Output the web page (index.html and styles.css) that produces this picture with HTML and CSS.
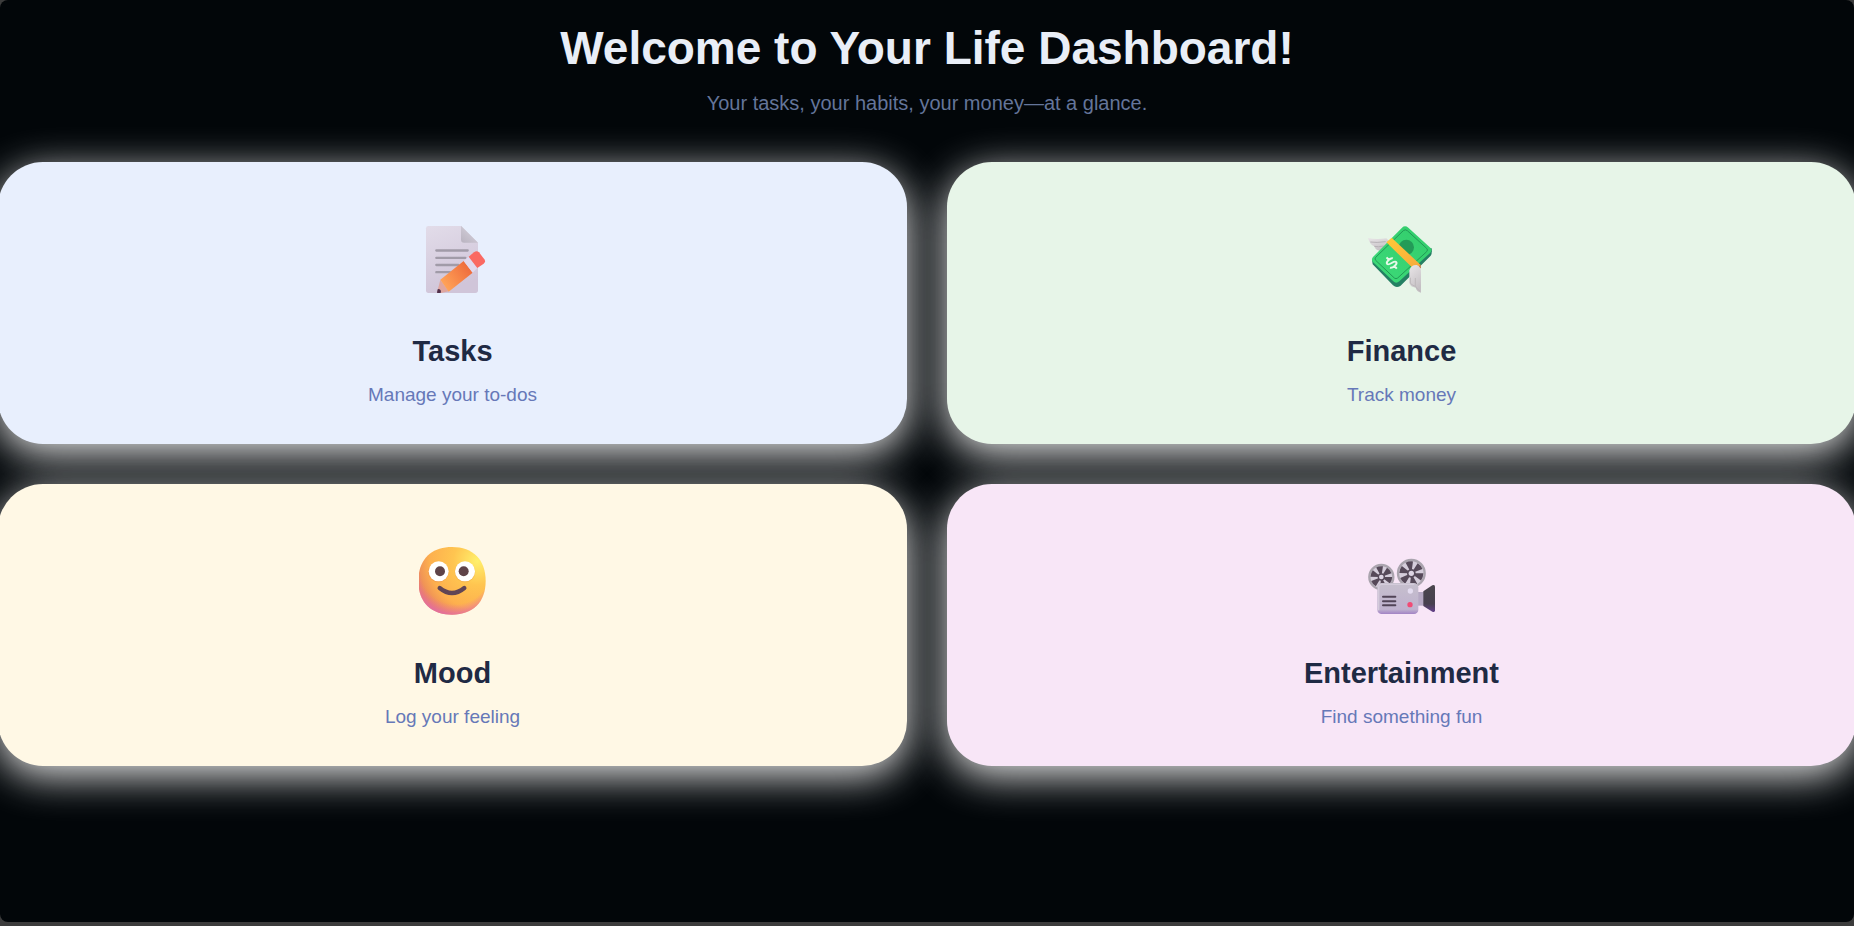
FILE: index.html
```html
<!DOCTYPE html>
<html lang="en">
<head>
<meta charset="utf-8">
<meta name="viewport" content="width=device-width, initial-scale=1">
<title>Life Dashboard</title>
<link rel="stylesheet" href="styles.css">
</head>
<body>
<main class="dashboard">
  <header class="intro">
    <h1 class="intro-title">Welcome to Your Life Dashboard!</h1>
    <p class="intro-text">Your tasks, your habits, your money—at a glance.</p>
  </header>
  <nav class="cards" aria-label="Sections">
    <a class="card card-tasks" href="#tasks">
      <svg class="card-icon" viewBox="57 45 204 204" aria-hidden="true">
        <defs>
          <linearGradient id="paper" x1="0" y1="0" x2="0.3" y2="1"><stop offset="0" stop-color="#e2dce9"/><stop offset="1" stop-color="#d0c5d9"/></linearGradient>
          <linearGradient id="fold" x1="0" y1="1" x2="0.6" y2="0.3"><stop offset="0" stop-color="#b9b3c0"/><stop offset="1" stop-color="#cfcad5"/></linearGradient>
          <linearGradient id="pencil" gradientUnits="userSpaceOnUse" x1="130" y1="220" x2="205" y2="165"><stop offset="0" stop-color="#ffa257"/><stop offset="1" stop-color="#ee6b3c"/></linearGradient>
        </defs>
        <path d="M85 48H183L234 98V241Q234 249 226 249H85Q78 249 78 241V55Q78 48 85 48Z" fill="url(#paper)"/>
        <path d="M183 47L234 98H192Q183 98 183 89Z" fill="url(#fold)"/>
        <path d="M109 121.500H203M109 143.500H196M109 165H175M109 186.500H150" stroke="#a19ba8" stroke-width="7" stroke-linecap="round"/>
        <path d="M111 248L121 209L146 244L124 249H113Z" fill="#dfa6a0"/>
        <path d="M111 248L113 238Q119 235 123 242L122 249H113Z" fill="#50304b"/>
        <path d="M121 209L191 153L218 188L146 245Z" fill="url(#pencil)"/>
        <path d="M191 153L206 140L232 174L218 188Z" fill="#e1d9ee"/>
        <path d="M206 140L222 127Q230 121 237 127L253 148Q258 155 251 161L232 174Z" fill="#fa6962"/>
      </svg>
      <h2 class="card-title">Tasks</h2>
      <p class="card-text">Manage your to-dos</p>
    </a>
    <a class="card card-finance" href="#finance">
      <svg class="card-icon" viewBox="57 45 204 204" aria-hidden="true">
        <defs>
          <linearGradient id="bill" x1="0" y1="1" x2="1" y2="0"><stop offset="0" stop-color="#3dda79"/><stop offset="1" stop-color="#32cc6b"/></linearGradient>
          <linearGradient id="band" x1="0" y1="0" x2="1" y2="1"><stop offset="0" stop-color="#ffca38"/><stop offset="1" stop-color="#f5a83b"/></linearGradient>
          <linearGradient id="wing" x1="0" y1="0" x2="0.4" y2="1"><stop offset="0" stop-color="#e9e6e8"/><stop offset="1" stop-color="#c5c0c4"/></linearGradient>
        </defs>
        <path d="M57 84Q80 89 112 85L123 96L97 123Q78 121 76 109Q63 105 57 84Z" fill="url(#wing)"/>
        <path d="M64 96Q82 99 110 95M76 109Q87 112 104 108" fill="none" stroke="#b6b1b5" stroke-width="3"/>
        <path d="M69 150L71 163L132 226Q142 235 154 228L245 137Q250 132 248 115L180 115Z" fill="#248063"/>
        <path d="M159 53Q168 45 178 53L244 113Q251 120 244 128L151 214Q141 222 133 214L71 155Q66 148 72 141Z" fill="url(#bill)"/>
        <path d="M163 62Q169 57 175 62L233 115Q238 120 233 125L146 204Q141 208 136 204L80 151Q76 147 80 142Z" fill="none" stroke="#219955" stroke-width="3"/>
        <circle cx="172" cy="112" r="23" fill="#239b57"/>
        <path d="M112 97L128 83L215 165L198 181Z" fill="url(#band)"/>
        <path d="M198 180L215 164L216 174L190 187Z" fill="#c57a48"/>
        <g transform="translate(128 159) rotate(-42)" fill="none" stroke="#e8f8e9" stroke-width="6">
          <path d="M12 -8C9 -14 -11 -15 -12 -7C-12 2 12 -2 12 7C11 15 -9 14 -13 7M0 -23V-12M0 12V23"/>
        </g>
        <path d="M181 181Q187 164 203 165Q217 170 216 188V248Q203 245 200 233Q184 231 181 219Z" fill="url(#wing)"/>
        <path d="M184 203V219Q188 226 199 229M199 204V228Q205 239 213 243" fill="none" stroke="#bdb8bb" stroke-width="3"/>
      </svg>
      <h2 class="card-title">Finance</h2>
      <p class="card-text">Track money</p>
    </a>
    <a class="card card-mood" href="#mood">
      <svg class="card-icon" viewBox="57 51 204 204" aria-hidden="true">
        <defs>
          <radialGradient id="face" gradientUnits="userSpaceOnUse" cx="232" cy="93" r="190"><stop offset="0" stop-color="#fff06c"/><stop offset="0.38" stop-color="#ffc550"/><stop offset="0.75" stop-color="#fdb04e"/><stop offset="1" stop-color="#ea875a"/></radialGradient>
          <radialGradient id="blush" gradientUnits="userSpaceOnUse" cx="166" cy="118" r="145"><stop offset="0.72" stop-color="#ed66ac" stop-opacity="0"/><stop offset="1" stop-color="#dd66b5" stop-opacity="0.9"/></radialGradient>
        </defs>
        <path d="M156 51C219 51 257 89 257 153C257 216 219 254 156 254C93 254 55 216 55 153C55 89 93 51 156 51Z" fill="url(#face)"/>
        <path d="M156 51C219 51 257 89 257 153C257 216 219 254 156 254C93 254 55 216 55 153C55 89 93 51 156 51Z" fill="url(#blush)"/>
        <circle cx="115" cy="126" r="31" fill="#e68a43" opacity="0.4"/>
        <circle cx="195" cy="126" r="31" fill="#e99d46" opacity="0.4"/>
        <circle cx="116" cy="124" r="30" fill="#fff"/>
        <circle cx="195" cy="124" r="30" fill="#fff"/>
        <circle cx="120" cy="124" r="15" fill="#5f4348"/>
        <circle cx="191" cy="124" r="15" fill="#5f4348"/>
        <path d="M119 174Q156 204 193 174" fill="none" stroke="#604555" stroke-width="13" stroke-linecap="round"/>
      </svg>
      <h2 class="card-title">Mood</h2>
      <p class="card-text">Log your feeling</p>
    </a>
    <a class="card card-fun" href="#entertainment">
      <svg class="card-icon" viewBox="54 21 204 204" aria-hidden="true">
        <defs>
          <linearGradient id="camera" x1="0" y1="0" x2="0" y2="1"><stop offset="0" stop-color="#c6bfcd"/><stop offset="0.85" stop-color="#bfb2ce"/><stop offset="1" stop-color="#a283c5"/></linearGradient>
          <linearGradient id="lens" x1="0" y1="0" x2="0" y2="1"><stop offset="0" stop-color="#4a464d"/><stop offset="0.7" stop-color="#47404f"/><stop offset="1" stop-color="#65408c"/></linearGradient>
        </defs>
        <circle cx="94" cy="111" r="36" fill="#d5cddb" stroke="#aaa4ae" stroke-width="7"/>
        <circle cx="94" cy="111" r="20" fill="none" stroke="#564959" stroke-width="25" stroke-dasharray="13 7.940"/>
        <circle cx="94" cy="111" r="11" fill="#574b5b"/>
        <circle cx="94" cy="111" r="7" fill="#ded5e4"/>
        <circle cx="184" cy="100" r="40" fill="#d5cddb" stroke="#aaa4ae" stroke-width="7"/>
        <circle cx="184" cy="100" r="22" fill="none" stroke="#564959" stroke-width="28" stroke-dasharray="14 9.040"/>
        <circle cx="184" cy="100" r="13" fill="#574b5b"/>
        <circle cx="184" cy="100" r="8" fill="#ded5e4"/>
        <rect x="200" y="156" width="24" height="41" fill="#b5a8c3"/>
        <path d="M220 154L247 136Q255 132 255 140V211Q255 219 247 215L220 198Z" fill="url(#lens)"/>
        <rect x="82" y="129" width="123" height="93" rx="13" fill="url(#camera)"/>
        <path d="M86 211V142Q86 133 95 133H193" fill="none" stroke="#d4ccdb" stroke-width="4"/>
        <path d="M99 170.500H136M99 183.500H136M99 196H136" stroke="#514457" stroke-width="6" stroke-linecap="round"/>
        <circle cx="181" cy="153" r="8" fill="#e4dcf0"/>
        <circle cx="180" cy="194" r="8" fill="#f14b75"/>
      </svg>
      <h2 class="card-title">Entertainment</h2>
      <p class="card-text">Find something fun</p>
    </a>
  </nav>
</main>
</body>
</html>
```
FILE: styles.css
```css
* {
  box-sizing: border-box;
}

body {
  margin: 0;
  padding-bottom: 4px;
  min-height: 100vh;
  display: flex;
  background: #3c3c3c;
  font-family: "Liberation Sans", Arial, sans-serif;
}

.dashboard {
  flex: 1;
  min-width: 0;
  padding-top: 20px;
  overflow: hidden;
  background: #020609;
  border-radius: 8px;
}

.intro {
  text-align: center;
  margin-bottom: 45px;
}

.intro-title {
  margin: 0 0 13px;
  font-size: 46px;
  line-height: 56px;
  color: #e9eef7;
}

.intro-text {
  margin: 0;
  font-size: 20px;
  line-height: 28px;
  color: #64759a;
}

.cards {
  display: grid;
  grid-template-columns: 1fr 1fr;
  gap: 40px;
  margin: 0 -2px;
}

.card {
  display: flex;
  flex-direction: column;
  align-items: center;
  padding: 63px 20px 37px;
  border-radius: 45px;
  box-shadow: 0 10px 40px rgba(255, 255, 255, 0.9);
  text-align: center;
  text-decoration: none;
}

.card-tasks {
  background: #e8effd;
}

.card-finance {
  background: #e7f5e8;
}

.card-mood {
  background: #fff8e5;
}

.card-fun {
  background: #f8e6f7;
}

.card-icon {
  width: 68px;
  height: 68px;
  margin-bottom: 40px;
}

.card-title {
  margin: 0 0 14px;
  font-size: 29px;
  line-height: 36px;
  color: #1f2a44;
}

.card-text {
  margin: 0;
  font-size: 19px;
  line-height: 24px;
  color: #6678b8;
}
```
